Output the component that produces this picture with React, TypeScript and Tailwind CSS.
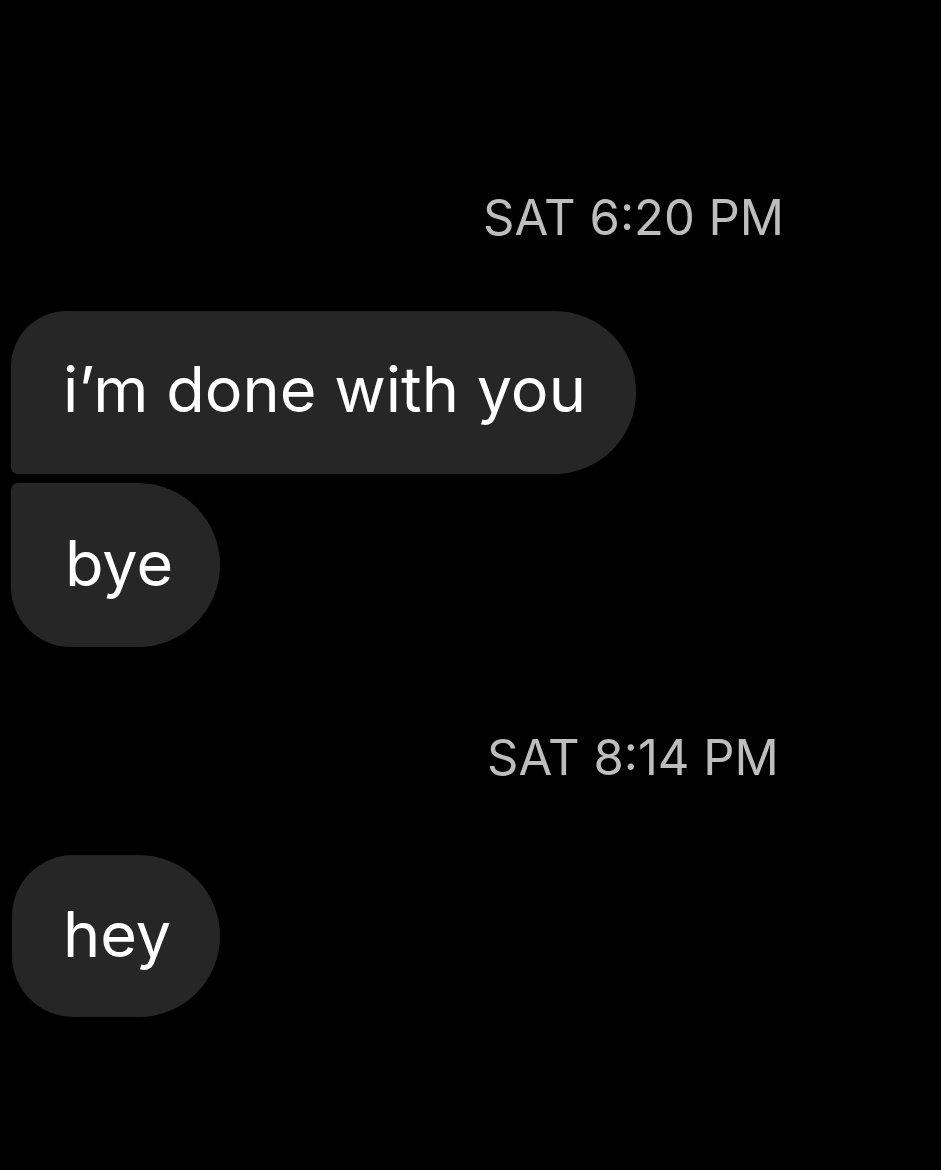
import React from "react";

const font = { fontFamily: 'Inter, "Liberation Sans", Arial, sans-serif' };

export default function App() {
  return (
    <div className="w-[941px] h-[1170px] bg-black overflow-hidden flex flex-col" style={font}>
      <div className="pt-[188px] pl-[483px] text-[49px] leading-[60px] text-[#bdbdbd]">SAT 6:20 PM</div>
      <div className="mt-[63px] ml-[11px] flex flex-col gap-[9px] items-start">
        <div className="h-[163px] w-[625px] bg-[#262626] rounded-tl-[56px] rounded-bl-[7px] rounded-r-[82px] flex items-center pl-[52px] pb-[6px] text-[63px] leading-none text-white">
          i’m done with you
        </div>
        <div className="h-[164px] w-[209px] bg-[#262626] rounded-tl-[7px] rounded-bl-[60px] rounded-r-[82px] flex items-center pl-[54px] pb-[4px] text-[63px] leading-none text-white">
          bye
        </div>
      </div>
      <div className="mt-[81px] pl-[487px] text-[49px] leading-[60px] text-[#bdbdbd]">SAT 8:14 PM</div>
      <div className="mt-[67px] ml-[12px] h-[162px] w-[208px] bg-[#262626] rounded-l-[62px] rounded-r-[82px] flex items-center pl-[51px] pb-[4px] text-[63px] leading-none text-white">
        hey
      </div>
    </div>
  );
}
